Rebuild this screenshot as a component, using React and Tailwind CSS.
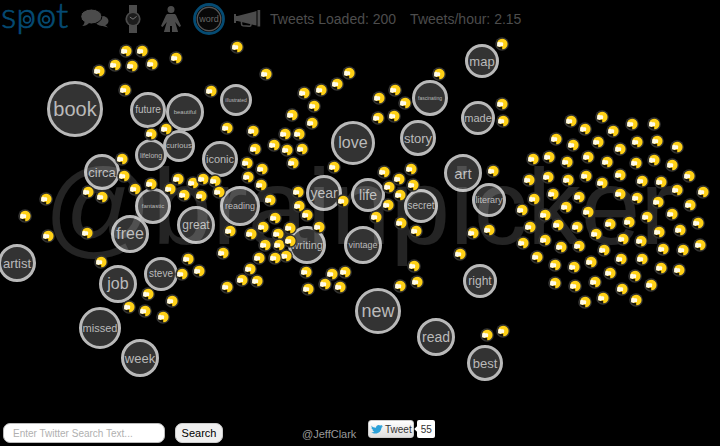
const TOP = 38;

// word, centre x, centre y, radius, text size
const WORDS = [
  ["book", 75, 109, 27, 20],
  ["future", 148, 110, 17, 10],
  ["beautiful", 185, 112, 18, 6],
  ["illustrated", 236, 100, 15, 5],
  ["curious", 179, 146, 15, 8],
  ["lifelong", 151, 155, 15, 7],
  ["circa", 102, 172, 17, 13],
  ["iconic", 220, 159, 17, 11],
  ["fantastic", 153, 206, 17, 6],
  ["reading", 240, 206, 19, 9],
  ["free", 130, 234, 18, 16],
  ["great", 196, 225, 18, 12],
  ["artist", 17, 263, 18, 13],
  ["steve", 161, 274, 16, 10],
  ["job", 118, 284, 18, 16],
  ["missed", 100, 328, 20, 11],
  ["week", 140, 358, 18, 13],
  ["love", 353, 143, 21, 16],
  ["map", 482, 61, 16, 13],
  ["fascinating", 430, 98, 17, 5],
  ["made", 478, 118, 16, 11],
  ["story", 418, 138, 17, 13],
  ["art", 463, 173, 18, 15],
  ["year", 324, 193, 17, 14],
  ["life", 368, 195, 16, 14],
  ["secret", 421, 206, 16, 10],
  ["literary", 489, 200, 16, 9],
  ["writing", 307, 245, 18, 11],
  ["vintage", 363, 245, 18, 9],
  ["new", 378, 311, 22, 18],
  ["right", 480, 281, 16, 12],
  ["read", 436, 337, 18, 14],
  ["best", 485, 363, 17, 13],
];

// centre of each tweet marker
const TWEETS = [
  [126, 51], [142, 51], [99, 71], [115, 65], [132, 66], [152, 64], [176, 58], [125, 90],
  [151, 134], [166, 129], [122, 159], [124, 176], [88, 192], [102, 197], [46, 199], [135, 189],
  [151, 184], [170, 189], [178, 179], [237, 47], [266, 74], [211, 91], [337, 84], [321, 90],
  [304, 93], [314, 106], [292, 115], [312, 123], [285, 134], [299, 134], [227, 128], [253, 131],
  [274, 145], [287, 150], [302, 149], [255, 149], [293, 163], [247, 163], [262, 169], [248, 177],
  [261, 185], [270, 200], [334, 167], [298, 192], [193, 183], [203, 179], [215, 181], [219, 192],
  [184, 195], [201, 196], [343, 201], [349, 73], [439, 74], [502, 44], [379, 98], [395, 90],
  [405, 103], [378, 118], [394, 116], [502, 104], [503, 121], [384, 172], [411, 169], [399, 179],
  [389, 187], [413, 185], [400, 195], [388, 205], [493, 171], [25, 216], [48, 236], [87, 233],
  [101, 262], [148, 294], [172, 301], [129, 307], [145, 311], [163, 317], [182, 274], [230, 231],
  [251, 234], [275, 218], [263, 227], [290, 228], [278, 234], [299, 206], [307, 215], [319, 227],
  [265, 245], [279, 245], [290, 241], [286, 256], [259, 258], [275, 258], [223, 253], [250, 269],
  [242, 280], [257, 281], [227, 287], [188, 259], [199, 271], [306, 272], [308, 289], [325, 284],
  [332, 274], [345, 272], [340, 287], [376, 217], [401, 223], [416, 231], [473, 233], [489, 230],
  [460, 254], [414, 266], [417, 282], [400, 286], [487, 335], [503, 331], [602, 117], [571, 121],
  [632, 124], [654, 124], [585, 129], [613, 131], [556, 139], [573, 145], [598, 142], [620, 149],
  [637, 142], [657, 141], [677, 147], [533, 159], [549, 157], [567, 162], [588, 157], [607, 162],
  [636, 163], [654, 160], [672, 165], [529, 180], [548, 177], [568, 180], [586, 176], [602, 183],
  [620, 175], [642, 181], [661, 182], [689, 176], [677, 190], [703, 192], [534, 199], [553, 194],
  [579, 197], [620, 194], [637, 198], [658, 202], [690, 205], [566, 207], [522, 210], [588, 212],
  [672, 214], [545, 215], [530, 227], [558, 225], [577, 227], [596, 234], [610, 224], [629, 222],
  [647, 217], [659, 232], [680, 230], [698, 223], [523, 243], [545, 240], [561, 247], [579, 246],
  [604, 250], [623, 239], [641, 241], [663, 249], [683, 250], [700, 245], [537, 257], [555, 265],
  [574, 267], [591, 262], [621, 259], [642, 259], [661, 268], [679, 270], [610, 273], [635, 276],
  [651, 285], [555, 283], [575, 286], [595, 282], [622, 289], [585, 302], [603, 298], [636, 300],
];

function Logo() {
  return (
    <svg width="76" height="38" viewBox="0 0 76 38" role="img" aria-label="spot" className="shrink-0 overflow-visible">
      <text x="1" y="28" fontSize="36" fontWeight="300" fill="#054b73" stroke="#054b73" strokeWidth="0.600" className="font-['Lato',sans-serif]">spot</text>
      <circle cx="27" cy="19.500" r="3.400" fill="none" stroke="#054b73" strokeWidth="1.800" />
      <circle cx="46" cy="19.500" r="3.400" fill="none" stroke="#054b73" strokeWidth="1.800" />
    </svg>
  );
}

function ChatIcon() {
  return (
    <svg width="28" height="20" viewBox="0 0 28 20" fill="#4b4b4b">
      <ellipse cx="21" cy="12" rx="6.5" ry="5" />
      <path d="M23 15l4 3.6-7-2z" />
      <ellipse cx="10.3" cy="7.5" rx="10.6" ry="7.5" stroke="#000" strokeWidth="1" />
      <path d="M3.6 12c0 2.400-.8 3.800-2.400 5 3 0 5.200-1 6.800-2.900z" />
    </svg>
  );
}

function WatchIcon() {
  return (
    <svg width="16" height="28" viewBox="0 0 16 28">
      <path d="M4 0h8v28H4z" fill="#4b4b4b" />
      <circle cx="8" cy="14" r="7.600" fill="#4b4b4b" />
      <circle cx="8" cy="14" r="5.900" fill="#1c1c1c" />
      <path d="M4.800 12l3.200 2.200 3.600-2.800" fill="none" stroke="#777" strokeWidth="1" />
    </svg>
  );
}

function PersonIcon() {
  return (
    <svg width="20" height="26" viewBox="0 0 20 26" fill="#4b4b4b">
      <circle cx="10" cy="3.500" r="3.500" />
      <path d="M7 8h6c1.200 0 1.800.6 2.300 1.800L20 20l-1.600 1-4.200-5 2.900 10H11v-6H9v6H2.900l2.900-10-4.200 5L0 20 4.700 9.800C5.200 8.600 5.800 8 7 8z" />
    </svg>
  );
}

function WordIcon() {
  return (
    <svg width="32" height="32" viewBox="0 0 32 32">
      <circle cx="16" cy="16" r="14.500" fill="none" stroke="#054b73" strokeWidth="2.800" />
      <circle cx="16" cy="16" r="11.800" fill="#080808" stroke="#555" strokeWidth="1.400" />
      <text x="16" y="19" textAnchor="middle" fontSize="9" fill="#666" className="font-['Liberation_Sans',sans-serif]">word</text>
    </svg>
  );
}

function MegaphoneIcon() {
  return (
    <svg width="27" height="18" viewBox="0 0 27 18" fill="#4b4b4b">
      <path d="M0 4h2v2h1.500L22.500 1v14.500L3.500 11H2v2H0z" />
      <path d="M23.500 0h2.700v16.500h-2.700z" />
      <path d="M7.500 11v3c0 1.200.5 1.600 1.500 1.700l6.500.5c1.200 0 1.500-.5 1.500-1.500V13" fill="none" stroke="#4b4b4b" strokeWidth="1.500" />
    </svg>
  );
}

const VIEWS = [
  ["Conversations", ChatIcon],
  ["Timeline", WatchIcon],
  ["People", PersonIcon],
  ["Words", WordIcon],
  ["Sources", MegaphoneIcon],
];

function Bubble({ word, x, y, r, size }) {
  return (
    <div
      className="absolute flex -translate-x-1/2 -translate-y-1/2 items-center justify-center rounded-full border-[3px] border-[#b9b9b9] bg-[#333] leading-none text-[#bababa]"
      style={{ left: x, top: y - TOP, width: 2 * r + 2, height: 2 * r + 2, fontSize: size }}
    >
      {word}
    </div>
  );
}

function Marker({ x, y }) {
  return (
    <svg className="absolute -translate-x-1/2 -translate-y-1/2" style={{ left: x, top: y - TOP }} width="14" height="14" viewBox="0 0 14 14">
      <circle cx="7" cy="7" r="6.800" fill="#353535" />
      <circle cx="7" cy="7" r="5.400" fill="#1a1608" />
      <path d="M2.600 4.400C4 1.700 8 .9 10.700 3c2.600 2.200 2.400 6.200-.1 8.200-1 .8-2.200 1.100-3.400 1.100V9.800H4.600L2.200 9z" fill="#ffd117" />
      <path d="M2.200 5.400l2-1 .8.800h2.400l.9 1.200-.4 2.700H5.700l-.6.800-3-.7z" fill="#fffbe8" />
    </svg>
  );
}

export default function App() {
  return (
    <div className="min-h-screen overflow-hidden bg-black font-['Liberation_Sans',Arial,sans-serif]">
      <header className="flex h-[38px] items-center">
        <Logo />
        <nav className="flex shrink-0">
          {VIEWS.map(([name, Icon]) => (
            <button key={name} type="button" aria-label={name} className="flex h-[38px] w-[38px] items-center justify-center">
              <Icon />
            </button>
          ))}
        </nav>
        <p className="ml-1 flex gap-3.5 whitespace-nowrap text-[14px] leading-5 text-[#4d4d4d]">
          <span>Tweets Loaded: 200</span>
          <span>Tweets/hour: 2.15</span>
        </p>
      </header>

      <main className="relative h-[382px]">
        {WORDS.map(([word, x, y, r, size]) => (
          <Bubble key={word} word={word} x={x} y={y} r={r} size={size} />
        ))}
        <h1 className="absolute left-[44px] top-[116px] whitespace-nowrap text-[107px] leading-none text-white/14">@brainpicker</h1>
        {TWEETS.map(([x, y]) => (
          <Marker key={`${x}-${y}`} x={x} y={y} />
        ))}
      </main>

      <footer className="flex items-start pl-[3px]">
        <form className="flex items-center gap-[10px] pt-[3px]" onSubmit={(e) => e.preventDefault()}>
          <input
            type="text"
            aria-label="Twitter search text"
            placeholder="Enter Twitter Search Text..."
            className="h-5 w-[162px] rounded-[7px] border border-[#bbb] bg-white px-[9px] text-[10px] text-black placeholder:text-[#b0b0b0]"
          />
          <button type="submit" className="h-5 w-12 rounded-[7px] border border-[#ccc] bg-[#efefef] text-[11px] leading-none text-black">
            Search
          </button>
        </form>
        <a href="#jeffclark" className="ml-[79px] mt-2 text-[11px] leading-3 text-[#999]">@JeffClark</a>
        <div className="ml-3 flex items-center gap-[3px]">
          <button type="button" className="flex h-[18px] w-[46px] items-center justify-center gap-[2px] rounded-[3px] border border-[#ccc] bg-linear-to-b from-white to-[#dedede] text-[10px] text-[#333]">
            <svg width="12" height="10" viewBox="0 0 12 10" fill="#2aa0d8">
              <path d="M0 1.500C1.500 3 3 3.700 5 3.700 5 1.500 7.500.2 9.200 1.500L11.500 1l-1 1.300 1.500.2-1.600 1.200C10.300 7 7.800 9.500 4.500 9.500 2.700 9.500 1.200 9 .3 8.200c1.300 0 2.300-.2 3-.8C2.200 7.200 1.600 6.600 1.300 5.800h1C1 5.300.4 4.500.4 3.500l.9.200C.5 3 .2 2.200 0 1.500z" />
            </svg>
            Tweet
          </button>
          <span className="relative flex h-[18px] w-[18px] items-center justify-center rounded-[2px] bg-white text-[10px] text-[#333]">
            <span className="absolute -left-[2px] top-[7px] size-1 rotate-45 bg-white" />
            55
          </span>
        </div>
      </footer>
    </div>
  );
}
